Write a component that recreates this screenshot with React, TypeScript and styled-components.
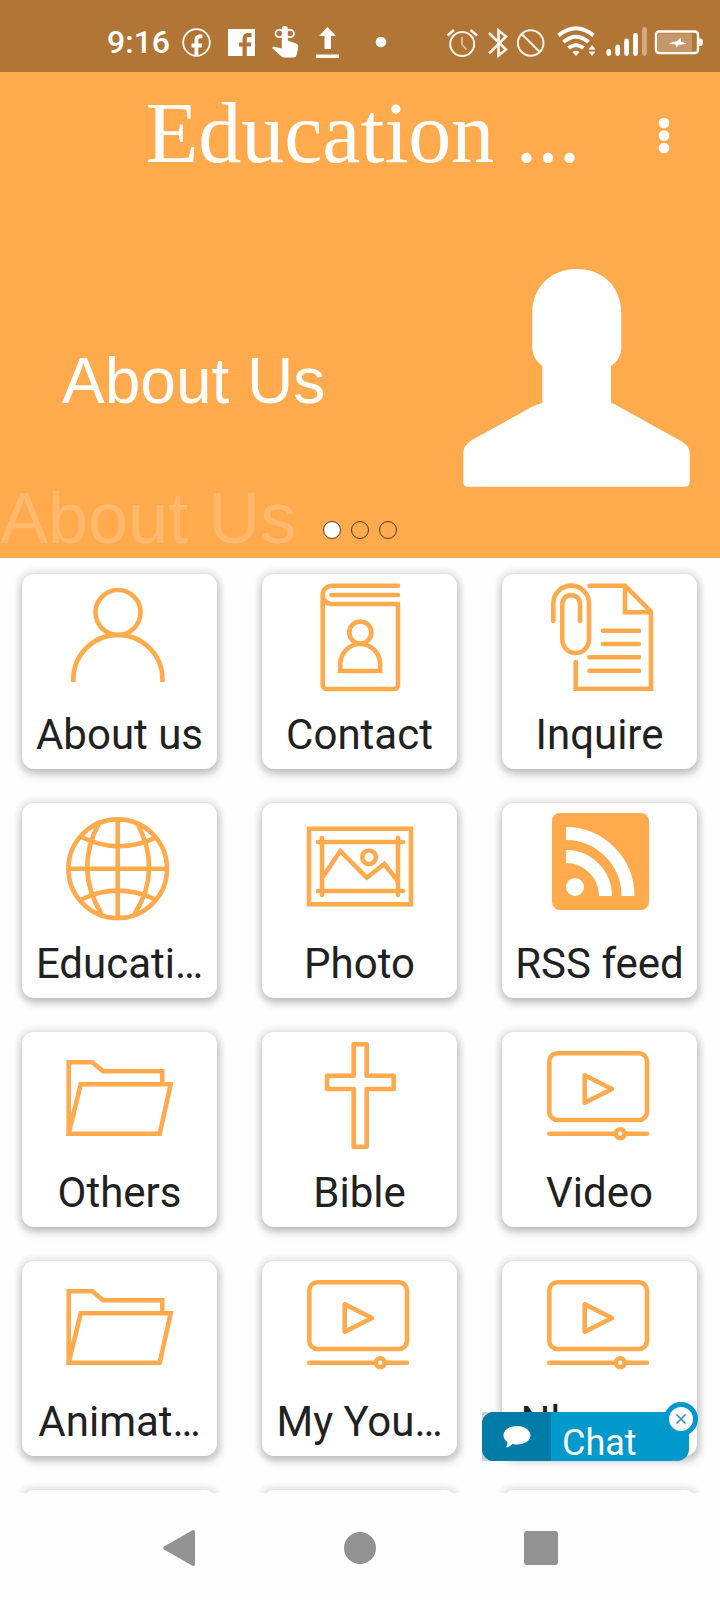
import React from "react";
import styled, { createGlobalStyle } from "styled-components";

const ORANGE = "#ffaa4d";

const GlobalStyle = createGlobalStyle`
  *, *::before, *::after { box-sizing: border-box; }
  body { margin: 0; background: #fefefe; }
  button { font: inherit; color: inherit; border: 0; padding: 0; background: none; cursor: pointer; }
  h1, h2, p { margin: 0; font-weight: 400; }
  svg { display: block; flex: none; }
`;

const Screen = styled.div`
  display: flex;
  flex-direction: column;
  height: 100vh;
  overflow: hidden;
  font-family: Roboto, "Liberation Sans", sans-serif;
  color: #212121;
`;

const StatusBar = styled.div`
  display: flex;
  flex: none;
  align-items: center;
  justify-content: space-between;
  height: 72px;
  padding: 12px 16px 0 107px;
  background: #b17636;
  color: #fff;
`;

const StatusGroup = styled.div<{ $gap: number }>`
  display: flex;
  align-items: center;
  gap: ${(p) => p.$gap}px;
`;

const Clock = styled.span`
  font-size: 32px;
  line-height: 40px;
  font-weight: 500;
`;

const AppBar = styled.header`
  display: grid;
  flex: none;
  grid-template-columns: 118px 1fr 112px;
  align-items: center;
  height: 128px;
  background: ${ORANGE};
  color: #fff;
`;

const Title = styled.h1`
  grid-column: 2;
  padding-bottom: 6px;
  font-family: "Liberation Serif", serif;
  font-size: 86px;
  line-height: 96px;
  text-align: center;
  white-space: nowrap;
`;

const MenuButton = styled.button`
  display: flex;
  justify-content: center;
  padding: 16px 0;
`;

const Banner = styled.section`
  position: relative;
  display: flex;
  flex: none;
  align-items: center;
  justify-content: space-between;
  padding: 69px 30px 71px 62px;
  background: ${ORANGE};
  color: #fff;
  font-family: "Liberation Sans", sans-serif;
`;

const BannerTitle = styled.h2`
  padding-top: 6px;
  font-size: 64px;
  line-height: 72px;
`;

const BannerEcho = styled.p`
  position: absolute;
  left: 0;
  bottom: 0;
  font-size: 72px;
  line-height: 80px;
  color: #ffb96d;
`;

const Dots = styled.div`
  position: absolute;
  left: 0;
  right: 0;
  bottom: 19px;
  display: flex;
  justify-content: center;
  gap: 10px;
`;

const Dot = styled.button<{ $active?: boolean }>`
  width: 18px;
  height: 18px;
  border: 1px solid #4d3a26;
  border-radius: 50%;
  background: ${(p) => (p.$active ? "#fff" : "transparent")};
`;

const Content = styled.main`
  position: relative;
  flex: 1;
  min-height: 0;
`;

const Grid = styled.div`
  display: grid;
  grid-template-columns: repeat(3, 1fr);
  row-gap: 34px;
  height: 100%;
  align-content: start;
  padding-top: 16px;
  overflow-y: auto;
  scrollbar-width: none;
`;

const Card = styled.button`
  display: flex;
  flex-direction: column;
  align-items: center;
  min-width: 0;
  aspect-ratio: 1;
  margin: 0 23px 0 22px;
  padding-top: 9px;
  border-radius: 12px;
  background: #fff;
  box-shadow:
    0 0 2px 7px rgba(0, 0, 0, 0.03),
    0 1px 5px 1px rgba(0, 0, 0, 0.1),
    1px 5px 10px 1px rgba(0, 0, 0, 0.16);
`;

const Label = styled.span`
  margin-top: 19px;
  font-size: 42px;
  line-height: 48px;
  white-space: nowrap;
`;

const Line = styled.svg`
  width: 109px;
  height: 109px;
  fill: none;
  stroke: ${ORANGE};
  stroke-width: 4.6;
`;

const ChatWidget = styled.div`
  position: absolute;
  right: 31px;
  bottom: 32px;
  background: linear-gradient(to right, #cfcfcf 12px, transparent 12px);
`;

const ChatButton = styled.button`
  display: flex;
  width: 207px;
  height: 49px;
  border-radius: 12px;
  overflow: hidden;
  background: #0099cc;
  color: #fff;
  font-size: 36px;
  line-height: 44px;
  text-align: left;
`;

const ChatIcon = styled.span`
  display: flex;
  align-items: center;
  justify-content: center;
  width: 69px;
  height: 49px;
  background: #007ca6;
`;

const ChatText = styled.span`
  padding: 9px 0 0 11px;
`;

const ChatClose = styled.button`
  position: absolute;
  top: -10px;
  right: -9px;
  display: flex;
  align-items: center;
  justify-content: center;
  width: 34px;
  height: 34px;
  border: 5px solid #0099cc;
  border-radius: 50%;
  background: #fff;
`;

const NavBar = styled.nav`
  display: flex;
  flex: none;
  align-items: center;
  justify-content: center;
  gap: 147px;
  height: 107px;
  padding-top: 2px;
  background: #fefefe;
  color: #929292;
`;

const NavButton = styled.button`
  display: flex;
  justify-content: center;
  width: 34px;
`;

const icons = {
  user: (
    <Line viewBox="0 0 109 109">
      <circle cx="53" cy="29.5" r="22.5" />
      <path d="M8.3 99v-2.5a44.6 44.6 0 0 1 89.2 0V99" />
    </Line>
  ),
  contact: (
    <Line viewBox="0 0 109 109" strokeLinecap="round">
      <path d="M93 2.8H26.8A9.1 9.1 0 0 0 17.7 12v90a4 4 0 0 0 4 4H89a4 4 0 0 0 4-4V21H26.8A9.1 9.1 0 0 1 17.7 12M26.5 12H93" />
      <circle cx="55.3" cy="49.5" r="11" />
      <path d="M35.3 88v-7a19.9 20 0 0 1 39.8 0v7z" />
    </Line>
  ),
  inquire: (
    <Line viewBox="0 0 109 109" strokeLinecap="round">
      <path d="M8.3 38V20.5a17.85 17.85 0 0 1 35.7 0v36.1a13.35 13.35 0 0 1-26.7 0V21A8.85 8.85 0 0 1 35 21v17" />
      <path d="M44.5 2.7H80l26 26v77H30.7V79M80 2.7v26.6h26" />
      <path d="M58 47.7h36M58 61h36M44.5 74.3H94M44.5 87.7H94" />
    </Line>
  ),
  globe: (
    <Line viewBox="0 0 109 109">
      <circle cx="52.7" cy="56.7" r="49.3" />
      <path d="M52.7 7.4V106M3.4 56.7h98.6" />
      <path d="M34 11C18.5 40 17 70 36.5 102M72 11c16 29 17 61-2.5 91" />
      <path d="M16 24.7q37 18.6 74.7 1M16.7 87.3q36-17.3 73.3 0" />
    </Line>
  ),
  photo: (
    <Line viewBox="0 0 109 109" strokeLinecap="round">
      <path d="M4 16.7h102v75.6H4z" />
      <path d="M17 26v57M93 26v57M13 30h85M13 79h85" />
      <path d="m17.7 65 17.6-26 26.4 26.7L79.3 52l13.5 17" strokeLinecap="butt" />
      <circle cx="64" cy="45.3" r="6.8" />
    </Line>
  ),
  rss: (
    <Line viewBox="0 0 109 109">
      <rect x="7" y="1" width="97" height="97" rx="8" fill={ORANGE} stroke="none" />
      <circle cx="30" cy="75" r="9" fill="#fff" stroke="none" />
      <path d="M21 44.5A39.5 39.5 0 0 1 60.5 84M21 21.5A62.5 62.5 0 0 1 83 84" stroke="#fff" strokeWidth="13" />
    </Line>
  ),
  folder: (
    <Line viewBox="0 0 109 109">
      <path d="M97.3 43V30.3H38l-10.7-9H3.7v71.5" />
      <path d="M15.7 43.3h90L94.7 92.7h-91z" />
    </Line>
  ),
  cross: (
    <Line viewBox="0 0 109 109">
      <path d="M48.7 3.3h13v31.4h27V48h-27v57.7h-13V48H22V34.7h26.7z" strokeLinejoin="round" />
    </Line>
  ),
  video: (
    <Line viewBox="0 0 109 109" strokeLinecap="round" strokeLinejoin="round">
      <rect x="4.3" y="12.3" width="97.7" height="66.7" rx="8" />
      <path d="M39.7 34.3 67 48 39.7 61.7zM4.3 92.7H102" />
      <circle cx="75.3" cy="92.7" r="4.4" fill="#fff" />
    </Line>
  ),
};

const cards: { icon: keyof typeof icons; label: string }[] = [
  { icon: "user", label: "About us" },
  { icon: "contact", label: "Contact" },
  { icon: "inquire", label: "Inquire" },
  { icon: "globe", label: "Educati…" },
  { icon: "photo", label: "Photo" },
  { icon: "rss", label: "RSS feed" },
  { icon: "folder", label: "Others" },
  { icon: "cross", label: "Bible" },
  { icon: "video", label: "Video" },
  { icon: "folder", label: "Animat…" },
  { icon: "video", label: "My You…" },
  { icon: "video", label: "Nkwon…" },
];

const LeftStatusIcons = () => (
  <StatusGroup $gap={17}>
    <svg width="29" height="29" viewBox="0 0 29 29">
      <circle cx="14.5" cy="14.5" r="13.3" fill="none" stroke="#fff" strokeWidth="1.8" />
      <path d="M12.5 28v-8.500H9.500v-4h3v-3c0-4 2.200-6 5.500-6h2.400v3.700h-2c-1.700 0-2.100.8-2.100 2.300v3h4l-.7 4h-3.300V28z" fill="#fff" />
    </svg>
    <svg width="27" height="27" viewBox="0 0 27 27">
      <path d="M0 0h27v27H0z" fill="#fff" />
      <path d="M14.500 27V17.500h-3.500V13.500h3.500v-3c0-4 2-6.500 5.500-6.500h3.500v4h-2.500c-1.800 0-2.200.8-2.200 2.500v3h4.700l-.7 4h-4V27z" fill="#b17636" />
    </svg>
    <svg width="27" height="32" viewBox="0 0 27 32">
      <g fill="none" stroke="#fff" strokeWidth="1.8">
        <ellipse cx="7.500" cy="7.500" rx="4" ry="3.600" />
        <ellipse cx="18" cy="7.500" rx="4" ry="3.600" />
      </g>
      <path d="M9.800 3a3 3 0 0 1 6 0v11.500l8.700 3.200q2 1 1.800 3L25 28q-.8 3.500-3.500 3.500H12q-1.500 0-2.500-1L0 22l1.500-1.500 8.300 2z" fill="#fff" />
    </svg>
    <svg width="23" height="31" viewBox="0 0 23 31" fill="#fff">
      <path d="M11.500 0 20 9h-5v13H8.500V9H3zM0 27.500h23V31H0z" />
    </svg>
    <svg width="31" height="12" viewBox="0 0 31 12">
      <circle cx="25" cy="6" r="5.300" fill="#fff" />
    </svg>
  </StatusGroup>
);

const RightStatusIcons = () => (
  <svg width="257" height="32" viewBox="447 25 257 32" fill="none" stroke="#fff" strokeWidth="2">
    <g opacity="0.9">
      <circle cx="462.200" cy="43" r="12" />
      <path d="M447.500 34.500 454 29M477 34.500 470.500 29" strokeWidth="2.600" />
      <path d="M462 36v7.500l4.500 5" strokeWidth="1.800" opacity="0.6" />
      <path d="M489 32l17 16.500-7.500 6V29.500l7.500 6L489 52.500" strokeWidth="2.600" />
      <circle cx="530.700" cy="42" r="12.800" />
      <path d="m521.700 33 18 18" />
    </g>
    <g strokeWidth="4">
      <path d="M558.500 34.500q17.500-14.500 35 0M563.500 41q12.500-10.500 25 0M568.500 47q7.500-6 15 0" />
    </g>
    <path d="M572.500 51q3.500-2.500 7 0l-3.500 4zM592 44l3.500 4.500h-7zM592 55l3.500-4.500h-7z" fill="#fff" stroke="none" />
    <g strokeWidth="4.800" strokeLinecap="round">
      <path d="M608.800 50.500v2M617.700 46v6.500M626.600 40v12.500M635.500 34.500v18" />
      <path d="M644.500 28.500v24" opacity="0.4" />
    </g>
    <rect x="656" y="30.500" width="42" height="21.500" rx="3" strokeWidth="2.400" />
    <path d="M658 32.500h34v17.500h-34z" fill="#fff" fillOpacity="0.25" stroke="none" />
    <path d="M699 37.500h2q2 .5 2 3.800t-2 3.800h-2z" fill="#fff" stroke="none" opacity="0.9" />
    <path d="m669.500 42.500 7.500-2 3.500-3v3.500l5.500 1.500-7.500 1-2 2.500-.5-3z" fill="#fff" strokeWidth="0.800" />
  </svg>
);

export default function App() {
  return (
    <Screen>
      <GlobalStyle />
      <StatusBar>
        <StatusGroup $gap={12}>
          <Clock>9:16</Clock>
          <LeftStatusIcons />
        </StatusGroup>
        <RightStatusIcons />
      </StatusBar>

      <AppBar>
        <Title>Education ...</Title>
        <MenuButton aria-label="More options">
          <svg width="12" height="38" viewBox="0 0 12 38" fill="#fff">
            <circle cx="6" cy="6" r="5.300" />
            <circle cx="6" cy="18.500" r="5.300" />
            <circle cx="6" cy="31" r="5.300" />
          </svg>
        </MenuButton>
      </AppBar>

      <Banner>
        <BannerEcho aria-hidden="true">About Us</BannerEcho>
        <BannerTitle>About Us</BannerTitle>
        <svg width="227" height="218" viewBox="0 0 227 218" fill="#fff">
          <path d="M113.700 0C140 0 158.300 18 158.300 44V79C158 87 154 93 148 97V134C152 135 156 138 162 141L218 172C224 176 226.700 178 226.700 186V213Q226.700 217.700 222 217.700H5Q.3 217.700 .3 213V186C.3 178 3 175 9 171L65 140C70 137 75 135 79.300 134V97C73 92 69.500 86 69.300 79V44C69.300 18 88 0 113.700 0Z" />
        </svg>
        <Dots>
          <Dot $active aria-label="Slide 1" />
          <Dot aria-label="Slide 2" />
          <Dot aria-label="Slide 3" />
        </Dots>
      </Banner>

      <Content>
        <Grid>
          {cards.map((card) => (
            <Card key={card.label}>
              {icons[card.icon]}
              <Label>{card.label}</Label>
            </Card>
          ))}
          <Card as="div" />
          <Card as="div" />
          <Card as="div" />
        </Grid>
        <ChatWidget>
          <ChatButton>
            <ChatIcon>
              <svg width="28" height="24" viewBox="0 0 28 24" fill="#fff">
                <path d="M14 1c7.500 0 13.500 4 13.500 9.500S21.500 19.500 14 19.500q-2.500 0-4.500-.5-3 3-6.500 3.500 1.500-2.500 1.300-5.500Q.5 14 .5 10.500C.5 5 6.500 1 14 1z" />
              </svg>
            </ChatIcon>
            <ChatText>Chat</ChatText>
          </ChatButton>
          <ChatClose aria-label="Close chat">
            <svg width="12" height="12" viewBox="0 0 12 12" stroke="#2b8fb8" strokeWidth="1.600">
              <path d="m1.500 1.500 9 9m0-9-9 9" />
            </svg>
          </ChatClose>
        </ChatWidget>
      </Content>

      <NavBar>
        <NavButton aria-label="Back">
          <svg width="32" height="36" viewBox="0 0 32 36" fill="currentColor">
            <path d="M29 .5q3-1.500 3 1.500v32q0 3-3 1.500L1 19.500q-1.500-1.500 0-3z" />
          </svg>
        </NavButton>
        <NavButton aria-label="Home">
          <svg width="32" height="32" viewBox="0 0 32 32" fill="currentColor">
            <circle cx="16" cy="16" r="16" />
          </svg>
        </NavButton>
        <NavButton aria-label="Recent apps">
          <svg width="34" height="34" viewBox="0 0 34 34" fill="currentColor">
            <rect width="34" height="34" rx="3" />
          </svg>
        </NavButton>
      </NavBar>
    </Screen>
  );
}
